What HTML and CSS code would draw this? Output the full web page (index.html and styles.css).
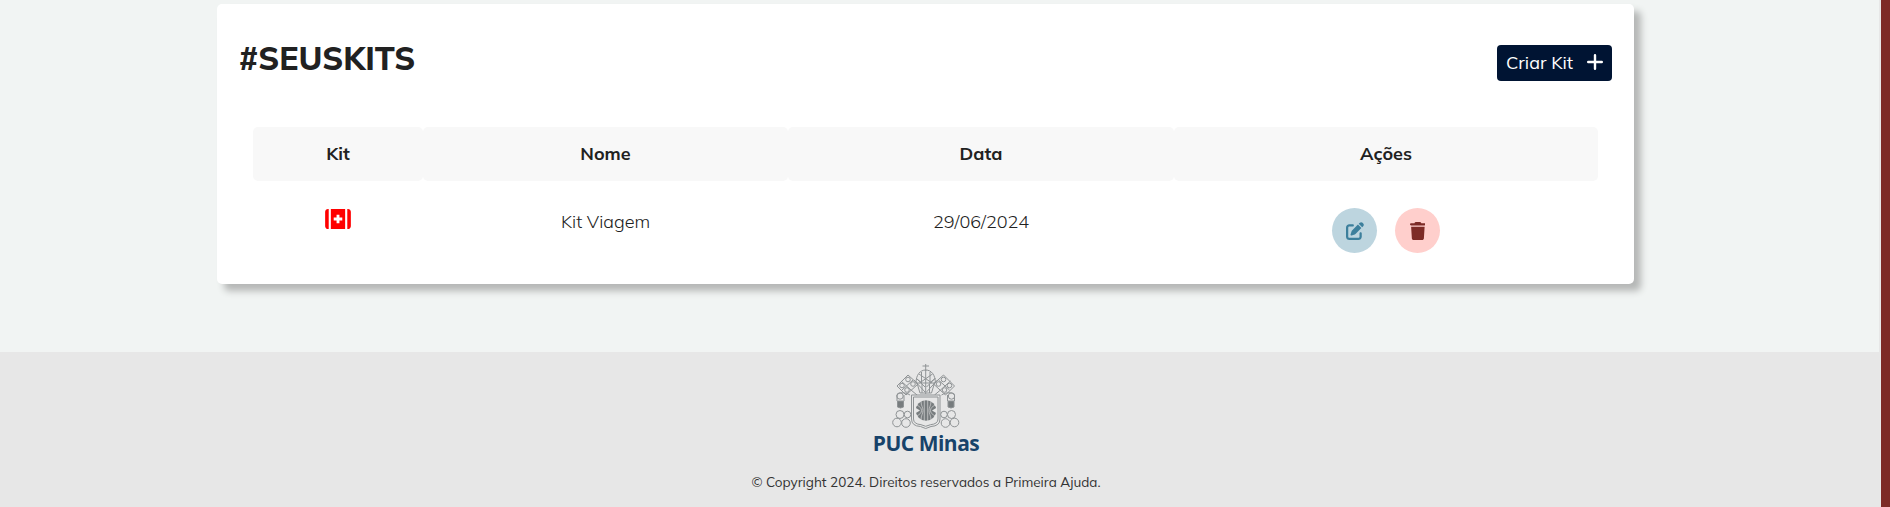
FILE: index.html
```html
<!DOCTYPE html>
<html lang="pt-BR">
<head>
<meta charset="utf-8">
<title>Primeira Ajuda - Seus Kits</title>
<link rel="stylesheet" href="styles.css">
</head>
<body>
<div class="page">
  <div class="content">
    <main class="main">
      <section class="card">
        <header class="card-head">
          <h1 class="title">#SEUSKITS</h1>
          <button class="create"><span class="create-label">Criar Kit</span>
            <svg class="plus" viewBox="0 0 16 16"><path d="M8 1.2v13.6M1.2 8h13.6"/></svg>
          </button>
        </header>
        <div class="kits">
          <div class="th">Kit</div>
          <div class="th">Nome</div>
          <div class="th">Data</div>
          <div class="th">Ações</div>
          <div class="td td-icon">
            <svg class="kit-icon" viewBox="0 0 576 448"><path d="M0 64C0 29 29 0 64 0h16v448H64c-35 0-64-29-64-64zM128 0h320v448H128zM496 0h16c35 0 64 29 64 64v320c0 35-29 64-64 64h-16z"/><path class="cross" d="M256 128h64v64h64v64h-64v64h-64v-64h-64v-64h64z"/></svg>
          </div>
          <div class="td">Kit Viagem</div>
          <div class="td">29/06/2024</div>
          <div class="td actions">
            <button class="round edit" aria-label="Editar"><svg viewBox="0 0 512 512"><path d="M471.6 21.7c-21.9-21.9-57.3-21.9-79.2 0L362.3 51.7l97.9 97.9 30.1-30.1c21.9-21.9 21.9-57.3 0-79.2zM172.4 241.7c-6.1 6.1-10.8 13.6-13.5 21.9l-29.6 88.8c-2.9 8.6-.6 18.1 5.8 24.6s15.9 8.7 24.6 5.8l88.8-29.6c8.2-2.7 15.7-7.4 21.9-13.5l167.3-167.4-97.9-97.9zM96 64c-53 0-96 43-96 96v256c0 53 43 96 96 96h256c53 0 96-43 96-96v-96c0-17.7-14.3-32-32-32s-32 14.3-32 32v96c0 17.7-14.3 32-32 32H96c-17.7 0-32-14.3-32-32V160c0-17.7 14.3-32 32-32h96c17.7 0 32-14.3 32-32s-14.3-32-32-32z"/></svg></button>
            <button class="round remove" aria-label="Excluir"><svg viewBox="0 0 448 512"><path d="M135.2 17.7 128 32H32C14.3 32 0 46.3 0 64s14.3 32 32 32h384c17.7 0 32-14.3 32-32s-14.3-32-32-32h-96l-7.2-14.3C307.4 6.8 296.3 0 284.2 0H163.8c-12.1 0-23.2 6.8-28.6 17.7zM416 136H32l21.2 331c1.6 25.3 22.6 45 47.9 45h245.8c25.3 0 46.3-19.7 47.9-45z"/></svg></button>
          </div>
        </div>
      </section>
    </main>
    <footer class="footer">
      <svg class="crest" viewBox="0 0 76 70">
        <defs>
          <g id="side">
            <path d="M9 24 20 13l10 9-12 11zM13 19l10 9M14 28l11-10"/>
            <circle cx="20" cy="17.5" r="2.3"/><circle cx="14" cy="23.5" r="2.3"/><circle cx="25" cy="22" r="2.3"/><circle cx="19" cy="28" r="2.3"/>
            <path d="M26 18l11 12M23 28l6 5M28 16l9 9M22 33c-5-3-11-3-13 0M9 33v6M16 33v6"/>
            <circle cx="12" cy="34" r="3.2"/>
            <circle cx="12" cy="52.5" r="4"/><circle cx="19.5" cy="52.5" r="3.3"/><circle cx="9" cy="60.5" r="4.3"/><circle cx="18" cy="61" r="4.3"/>
            <path class="solid" d="M9.500 39h6v6q-3 2-6 0z"/>
          </g>
        </defs>
        <g class="line">
          <use href="#side"/>
          <use href="#side" transform="matrix(-1 0 0 1 75.5 0)"/>
          <path d="M37.7 2v7M34.5 4h6.5M28 21c0-8 4-13 9.7-13s9.7 5 9.700 13zM29 21l3 10h11.500l3-10"/>
          <path d="M31 12l13 9M44.5 12l-13 9M29 17l5 4M46.5 17l-5 4M37.7 8v24M33.5 10v11M42 10v11M34 22v9M41.5 22v9"/>
          <path class="shield" d="M23.500 33h28.500v24q0 7-9 7.500l-5.300 2-5.200-2q-9-.5-9-7.500z"/>
          <path d="M25.500 35h24.500v22q0 5-7.500 5.700l-4.800 1.600-4.700-1.600q-7.500-.7-7.500-5.700z"/>
        </g>
        <circle class="solid" cx="38" cy="48.5" r="10.3"/>
        <path class="rays" d="M36.3 38v21M39.7 38v21M33 39c0 5 2 6 2 9.500s-2 4.500-2 9.500M43 39c0 5-2 6-2 9.500s2 4.500 2 9.500M29 43c3 2 4.500 3 4.500 5.500S32 52 29 54M47 43c-3 2-4.500 3-4.500 5.500S44 52 47 54"/>
        <path class="gap" d="M27 45.500l5 3-5 3zM49 45.500l-5 3 5 3z"/>
      </svg>
      <div class="brand">PUC Minas</div>
      <p class="copy">© Copyright 2024. Direitos reservados a Primeira Ajuda.</p>
    </footer>
  </div>
  <div class="scrollbar"></div>
</div>
</body>
</html>
```

FILE: styles.css
```css
* { box-sizing: border-box; }
body { margin: 0; font-family: Mulish, Lato, sans-serif; color: #212121; background: #e7e7e7; overflow: hidden; }
button { border: 0; padding: 0; font: inherit; }
.page { display: flex; height: 507px; }
.content { flex: 1; display: flex; flex-direction: column; }
.scrollbar { width: 9px; background: #7d2b26; }
.main { height: 352px; width: 1879px; padding: 4px 245px 0 217px; background: #f1f4f3; }
.card { height: 280px; background: #fff; border-radius: 5px; box-shadow: 7px 7px 7px #b5b7b6; }
.card-head { display: flex; justify-content: space-between; height: 123px; padding: 41px 22px 0 22px; }
.title { margin: -6px 0 0; font-size: 32px; line-height: 38px; font-weight: 800; }
.create { display: flex; align-items: center; gap: 14px; width: 115px; height: 36px; padding: 0 0 2px 9px; border-radius: 4px; background: #001433; color: #fff; font-size: 18px; }
.create-label { white-space: nowrap; }
.plus { width: 16px; height: 16px; fill: none; stroke: #fff; stroke-width: 2.4; stroke-linecap: round; }
.kits { display: grid; grid-template-columns: 170px 365px 386px 424px; grid-template-rows: 54px 75px; margin: 0 36px; text-align: center; font-size: 18px; }
.th { background: #f8f8f8; border-radius: 5px; line-height: 54px; font-weight: 700; }
.td { padding-top: 27px; line-height: 27px; font-weight: 300; }
.td-icon { padding-top: 28px; line-height: 0; }
.kit-icon { width: 26px; height: 20px; fill: #f00; }
.kit-icon .cross { fill: #fff; }
.actions { display: flex; justify-content: center; gap: 18px; }
.round { display: grid; place-items: center; width: 45px; height: 45px; border-radius: 50%; }
.round svg { height: 18px; }
.edit { background: #bdd5df; fill: #3c7f9c; }
.remove { background: #ffcfcc; fill: #7d2b26; }
.footer { height: 155px; padding: 10px 29px 0 0; display: flex; flex-direction: column; align-items: center; }
.crest { width: 76px; height: 70px; flex: none; }
.line { fill: none; stroke: #8f9395; stroke-width: 1; }
.shield { fill: #e7e7e7; }
.solid { fill: #777c7e; }
.rays { fill: none; stroke: #d5d5d5; stroke-width: .7; }
.gap { fill: #e7e7e7; }
.brand { margin-top: -2px; font: 700 21px/26px "Open Sans", sans-serif; color: #17436a; letter-spacing: -.5px; }
.copy { margin: 16px 0 0; font-size: 13.5px; line-height: 20px; color: #333; }
```
